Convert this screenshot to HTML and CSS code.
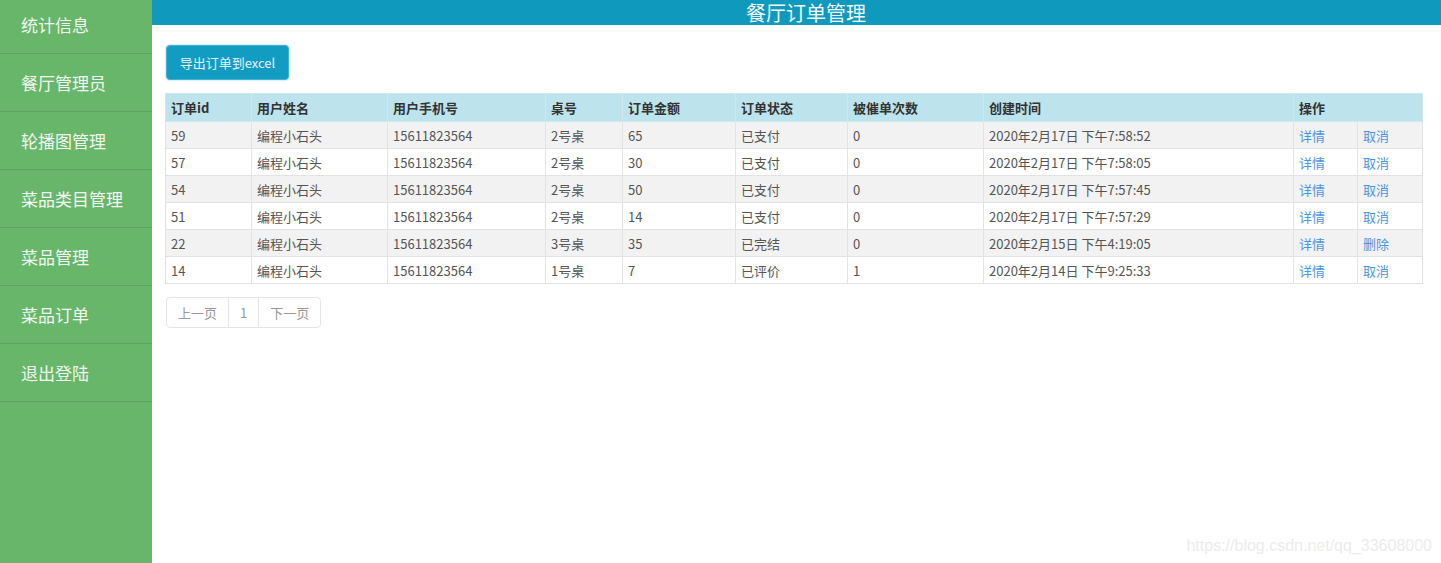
FILE: index.html
```html
<!DOCTYPE html>
<html lang="zh">
<head>
<meta charset="utf-8">
<title>餐厅订单管理</title>
<link rel="stylesheet" href="styles.css">
</head>
<body>
<div class="layout">
  <aside class="sidebar">
    <ul class="nav">
      <li class="nav-item">统计信息</li>
      <li class="nav-item">餐厅管理员</li>
      <li class="nav-item">轮播图管理</li>
      <li class="nav-item">菜品类目管理</li>
      <li class="nav-item">菜品管理</li>
      <li class="nav-item">菜品订单</li>
      <li class="nav-item">退出登陆</li>
    </ul>
  </aside>
  <main class="main">
    <header class="topbar">餐厅订单管理</header>
    <div class="content">
      <button class="btn-export">导出订单到excel</button>
      <table class="orders">
        <colgroup>
          <col style="width:86px"><col style="width:136px"><col style="width:158px"><col style="width:77px"><col style="width:113px"><col style="width:112px"><col style="width:136px"><col style="width:310px"><col style="width:64px"><col style="width:65px">
        </colgroup>
        <thead>
          <tr><th>订单id</th><th>用户姓名</th><th>用户手机号</th><th>桌号</th><th>订单金额</th><th>订单状态</th><th>被催单次数</th><th>创建时间</th><th colspan="2">操作</th></tr>
        </thead>
        <tbody>
          <tr><td>59</td><td>编程小石头</td><td>15611823564</td><td>2号桌</td><td>65</td><td>已支付</td><td>0</td><td>2020年2月17日 下午7:58:52</td><td class="link">详情</td><td class="link">取消</td></tr>
          <tr><td>57</td><td>编程小石头</td><td>15611823564</td><td>2号桌</td><td>30</td><td>已支付</td><td>0</td><td>2020年2月17日 下午7:58:05</td><td class="link">详情</td><td class="link">取消</td></tr>
          <tr><td>54</td><td>编程小石头</td><td>15611823564</td><td>2号桌</td><td>50</td><td>已支付</td><td>0</td><td>2020年2月17日 下午7:57:45</td><td class="link">详情</td><td class="link">取消</td></tr>
          <tr><td>51</td><td>编程小石头</td><td>15611823564</td><td>2号桌</td><td>14</td><td>已支付</td><td>0</td><td>2020年2月17日 下午7:57:29</td><td class="link">详情</td><td class="link">取消</td></tr>
          <tr><td>22</td><td>编程小石头</td><td>15611823564</td><td>3号桌</td><td>35</td><td>已完结</td><td>0</td><td>2020年2月15日 下午4:19:05</td><td class="link">详情</td><td class="link">删除</td></tr>
          <tr><td>14</td><td>编程小石头</td><td>15611823564</td><td>1号桌</td><td>7</td><td>已评价</td><td>1</td><td>2020年2月14日 下午9:25:33</td><td class="link">详情</td><td class="link">取消</td></tr>
        </tbody>
      </table>
      <ul class="pager">
        <li>上一页</li><li>1</li><li>下一页</li>
      </ul>
    </div>
  </main>
</div>
<div class="watermark">https://blog.csdn.net/qq_33608000</div>
</body>
</html>
```
FILE: styles.css
```css
html, body {
  margin: 0;
  padding: 0;
  height: 100%;
  overflow: hidden;
  background: #fff;
  font-family: "Noto Sans CJK SC", "Noto Sans", sans-serif;
}
.layout {
  display: flex;
  height: 563px;
}
.sidebar {
  width: 152px;
  flex: none;
  background: #68b669;
  overflow: hidden;
}
.nav {
  list-style: none;
  margin: -4px 0 0 0;
  padding: 0;
}
.nav-item {
  height: 57px;
  line-height: 57px;
  border-bottom: 1px solid #5ba55c;
  padding-left: 21px;
  color: #f2f7f2;
  font-size: 17px;
}
.main {
  flex: 1;
  display: flex;
  flex-direction: column;
  min-width: 0;
}
.topbar {
  height: 25px;
  line-height: 25px;
  padding-left: 19px;
  background: #0f99bd;
  color: #f2f8fb;
  text-align: center;
  font-size: 20px;
}
.content {
  padding: 20px 19px 0 13px;
}
.btn-export {
  display: block;
  width: 123px;
  height: 35px;
  margin-left: 1px;
  background: #139cc2;
  border: 1px solid #3fb1d1;
  border-radius: 4px;
  color: #e6f4f9;
  font-family: "Noto Sans CJK SC", "Noto Sans", sans-serif;
  font-size: 13px;
  padding: 0;
  box-shadow: 0 0 2px rgba(20,150,190,.5);
}
.orders {
  margin-top: 13px;
  width: 1257px;
  table-layout: fixed;
  border-collapse: collapse;
  font-size: 13px;
  color: #555;
}
.orders th, .orders td {
  border: 1px solid #e3e3e3;
  padding: 0 5px;
  text-align: left;
  white-space: nowrap;
  overflow: hidden;
}
.orders th {
  height: 27px;
  background: #bde3ed;
  color: #333;
  font-weight: bold;
  border-color: #cde8ef;
}
.orders td {
  height: 26px;
}
.orders tbody tr:nth-child(odd) {
  background: #f2f2f2;
}
.orders td.link {
  color: #4a96e0;
}
.pager {
  list-style: none;
  margin: 13px 0 0 1px;
  padding: 0;
  display: flex;
  width: max-content;
  border: 1px solid #e5e5e5;
  border-radius: 4px;
}
.pager li {
  height: 29px;
  line-height: 29px;
  padding: 0 11px;
  font-size: 13px;
  color: #999;
  border-left: 1px solid #e5e5e5;
}
.pager li:first-child {
  border-left: none;
}
.watermark {
  position: absolute;
  right: 9px;
  bottom: 8px;
  font-family: "Liberation Sans", Arial, sans-serif;
  font-size: 16px;
  color: #ececec;
}
```
